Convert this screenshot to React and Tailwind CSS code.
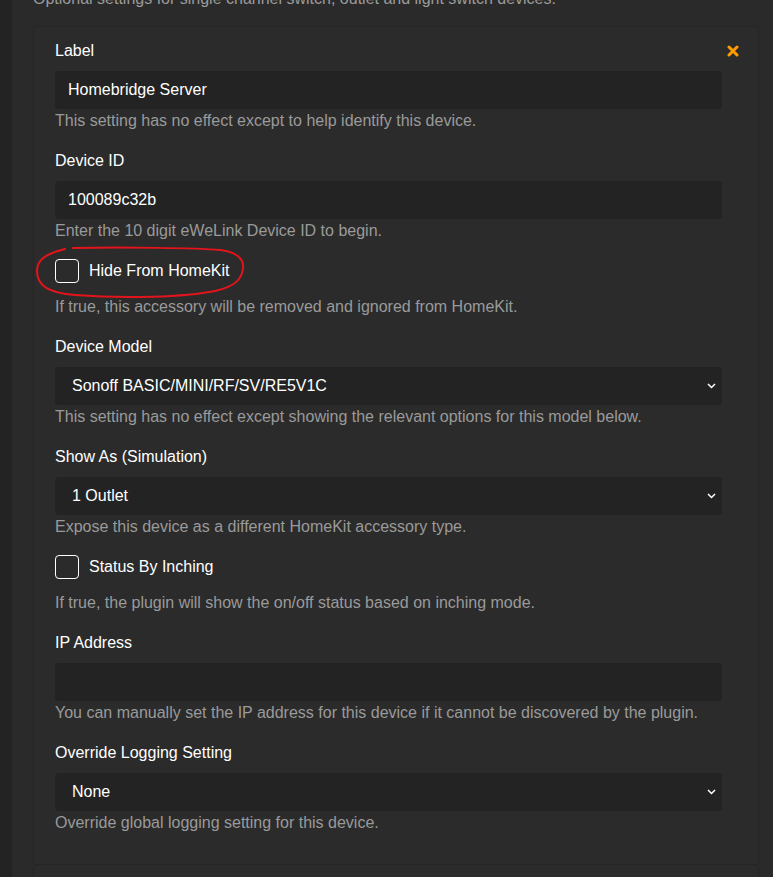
import React from 'react'

function Chevron() {
  return (
    <svg width="9" height="6" viewBox="0 0 9 6" className="shrink-0">
      <path d="M1 1l3.5 3.5L8 1" fill="none" stroke="#fff" strokeWidth="1.5" />
    </svg>
  )
}

function Help({ children, className = '' }) {
  return <p className={`leading-[22px] text-[#9a9a9a] ${className}`}>{children}</p>
}

function TextField({ label, value, help, first }) {
  return (
    <div className={first ? '' : 'mt-[17px]'}>
      <div className="leading-6 text-white">{label}</div>
      <div className="mt-[8px] flex h-[38px] items-center rounded-[4px] bg-[#232323] px-[13px] text-white">
        {value}
      </div>
      <Help className="pt-[1px]">{help}</Help>
    </div>
  )
}

function SelectField({ label, value, help }) {
  return (
    <div className="mt-[17px]">
      <div className="leading-6 text-white">{label}</div>
      <div className="mt-[8px] flex h-[38px] items-center justify-between rounded-[4px] bg-[#232323] pl-[17px] pr-[6px] text-white">
        <span>{value}</span>
        <Chevron />
      </div>
      <Help className="pt-[1px]">{help}</Help>
    </div>
  )
}

function CheckField({ label, help, circled }) {
  return (
    <div className="relative mt-[17px]">
      <div className="flex h-6 items-center gap-[10px] text-white">
        <span className="h-6 w-6 rounded-[4px] border border-white" />
        <span>{label}</span>
      </div>
      <Help className="mt-[13px]">{help}</Help>
      {circled && (
        <svg
          className="pointer-events-none absolute left-[-20px] top-[-13px]"
          width="214"
          height="56"
          viewBox="0 0 214 56"
        >
          <path
            d="M38 2 C90 1 160 2 185 4 C203 6 209 14 208 22 C207 32 202 40 180 45 C150 51 90 53 40 49 C14 47 2 40 2 25 C2 14 10 8 30 3"
            fill="none"
            stroke="#e3141b"
            strokeWidth="2"
            strokeLinecap="round"
          />
        </svg>
      )}
    </div>
  )
}

export default function App() {
  return (
    <div className="flex h-[877px] w-[773px] overflow-hidden bg-[#2a2a2a] font-['Liberation_Sans',Arial,sans-serif] text-[16px]">
      <div className="w-3 shrink-0 bg-[#232323]" />
      <div className="flex-1 pl-[21px] pr-[14px]">
        <p className="-mt-[13px] mb-[15px] leading-6 text-[#9a9a9a]">
          Optional settings for single channel switch, outlet and light switch devices.
        </p>

        <div className="flex rounded-[3px] border border-[#252525] bg-[#2b2b2b] pb-[30px] pl-[21px] pr-[14px] pt-[12px]">
          <div className="flex-1">
            <TextField
              first
              label="Label"
              value="Homebridge Server"
              help="This setting has no effect except to help identify this device."
            />
            <TextField
              label="Device ID"
              value="100089c32b"
              help="Enter the 10 digit eWeLink Device ID to begin."
            />
            <CheckField
              circled
              label="Hide From HomeKit"
              help="If true, this accessory will be removed and ignored from HomeKit."
            />
            <SelectField
              label="Device Model"
              value="Sonoff BASIC/MINI/RF/SV/RE5V1C"
              help="This setting has no effect except showing the relevant options for this model below."
            />
            <SelectField
              label="Show As (Simulation)"
              value="1 Outlet"
              help="Expose this device as a different HomeKit accessory type."
            />
            <CheckField
              label="Status By Inching"
              help="If true, the plugin will show the on/off status based on inching mode."
            />
            <TextField
              label="IP Address"
              value=""
              help="You can manually set the IP address for this device if it cannot be discovered by the plugin."
            />
            <SelectField
              label="Override Logging Setting"
              value="None"
              help="Override global logging setting for this device."
            />
          </div>
          <div className="flex h-6 w-[22px] items-center justify-center">
            <svg width="12" height="12" viewBox="0 0 12 12">
              <path d="M2 2l8 8M10 2l-8 8" stroke="#ff9c00" strokeWidth="3" strokeLinecap="round" />
            </svg>
          </div>
        </div>

        <div className="h-[60px] rounded-[3px] border border-t-0 border-[#252525] bg-[#2b2b2b]" />
      </div>
    </div>
  )
}
